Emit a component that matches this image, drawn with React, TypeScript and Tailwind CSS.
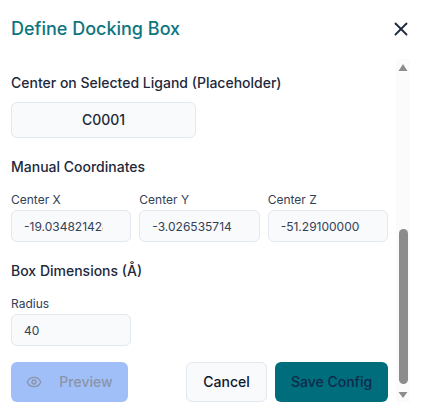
import React from 'react'
import { Eye, X } from 'lucide-react'

const inputClass =
  'w-full h-8 rounded-md border border-[#e2e8f0] bg-[#f8fafc] px-[12px] text-xs text-[#334155] outline-none'

const Field: React.FC<{ label: string; value: string }> = ({ label, value }) => (
  <div className="flex flex-col">
    <label className="mb-[3px] h-[15px] text-xs leading-[15px] text-[#334155]">{label}</label>
    <input type="number" className={inputClass} defaultValue={value} readOnly />
  </div>
)

const App: React.FC = () => {
  return (
    <div
      className="h-[420px] w-[429px] overflow-hidden bg-white"
      style={{ fontFamily: 'Inter, sans-serif' }}
    >
      <div className="flex h-[59px] items-start justify-between pl-[11px] pr-[17px] pt-[17px]">
        <h2 className="text-lg leading-6 font-medium text-[#0e7580]">Define Docking Box</h2>
        <button className="mt-px text-[#1e293b]" aria-label="Close">
          <X size={22} />
        </button>
      </div>
      <div className="flex h-[343px] pl-[11px] pr-[19px]">
        <div className="flex w-[377px] flex-col">
          <p className="mt-[14px] h-5 text-sm leading-5 font-medium text-[#1e293b]">
            Center on Selected Ligand (Placeholder)
          </p>
          <button className="mt-[9px] h-9 w-[185px] rounded-md border border-[#e2e8f0] bg-[#f8fafc] text-sm font-medium text-[#1e293b]">
            C0001
          </button>
          <p className="mt-[19px] h-5 text-sm leading-5 font-medium text-[#1e293b]">Manual Coordinates</p>
          <div className="mt-[15px] grid grid-cols-3 gap-2">
            <Field label="Center X" value="-19.03482142857" />
            <Field label="Center Y" value="-3.026535714285" />
            <Field label="Center Z" value="-51.29100000000" />
          </div>
          <p className="mt-[19px] h-5 text-sm leading-5 font-medium text-[#1e293b]">Box Dimensions (Å)</p>
          <div className="mt-[15px] w-[120px]">
            <Field label="Radius" value="40" />
          </div>
          <div className="mt-4 flex items-center">
            <button className="flex h-10 w-[117px] items-center justify-center gap-[17px] rounded-md bg-[#a0bff8] text-sm font-medium text-[#8a94a6]">
              <Eye size={16} />
              Preview
            </button>
            <button className="ml-auto h-10 w-[81px] rounded-md border border-[#e2e8f0] bg-[#f8fafc] text-sm font-medium text-[#0f172a]">
              Cancel
            </button>
            <button className="ml-2 h-10 w-[113px] rounded-md bg-[#006d7c] text-sm font-medium text-[#0f2a4a]">
              Save Config
            </button>
          </div>
        </div>
        <div className="ml-2 flex h-full w-[14px] flex-col items-center bg-[#fbfbfb]">
          <svg className="mt-[5px]" width="10" height="7" viewBox="0 0 10 7">
            <path d="M5 0 L9.5 7 L0.5 7 Z" fill="#8c8c8c" />
          </svg>
          <div className="mt-auto h-[155px] w-[9px] rounded-full bg-[#8c8c8c]" />
          <svg className="mb-[4px] mt-[8px]" width="10" height="6" viewBox="0 0 10 6">
            <path d="M5 6 L9.5 0 L0.5 0 Z" fill="#8c8c8c" />
          </svg>
        </div>
      </div>
    </div>
  )
}

export default App
